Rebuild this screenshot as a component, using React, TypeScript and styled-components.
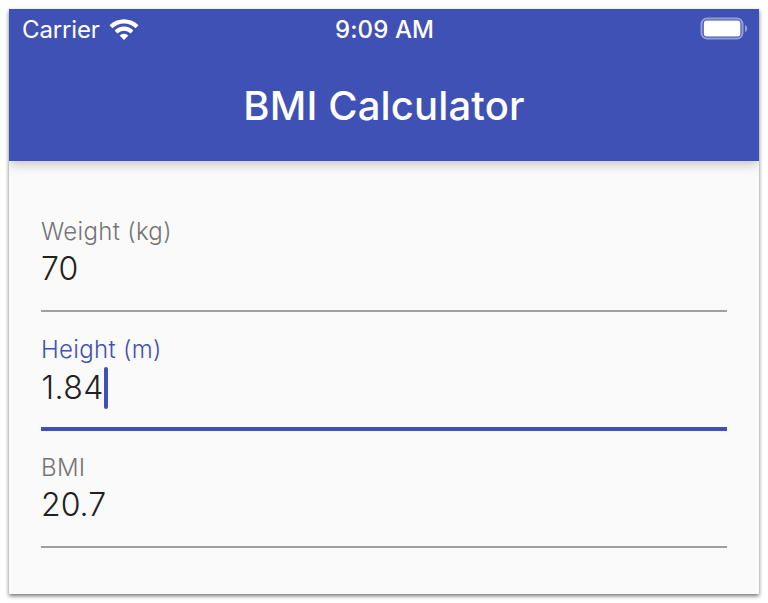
import styled, { createGlobalStyle } from "styled-components";

const GlobalStyle = createGlobalStyle`
    html, body {
        margin: 0;
        padding: 0;
        background: #ffffff;
    }
`

const WifiIcon = () => (
    <svg width="30" height="22" viewBox="0 0 30 22">
        <path d="M0.6 7.2 A20.5 20.5 0 0 1 29.4 7.2 L26.6 10.2 A16.5 16.5 0 0 0 3.4 10.2 Z" fill="#fff" />
        <path d="M5.6 12.4 A13.5 13.5 0 0 1 24.4 12.4 L21.6 15.4 A9.5 9.5 0 0 0 8.4 15.4 Z" fill="#fff" />
        <path d="M10.6 17.6 A6.4 6.4 0 0 1 19.4 17.6 L15 22 Z" fill="#fff" />
    </svg>
)

const BatteryIcon = () => (
    <svg width="48" height="24" viewBox="0 0 48 24">
        <rect x="1.5" y="1.5" width="41" height="20" rx="5.5" fill="none" stroke="#fff" strokeOpacity="0.45" strokeWidth="2" />
        <rect x="3.8" y="3.5" width="36.6" height="16" rx="3" fill="#fff" />
        <path d="M45 8 C46.6 8.5 47.2 10 47.2 11.5 C47.2 13 46.6 14.5 45 15 Z" fill="#fff" fillOpacity="0.45" />
    </svg>
)

const Field = ({ label, value, focused, last }: { label: string; value: string; focused?: boolean; last?: boolean }) => (
    <FieldBox $focused={focused} $last={last}>
        <Label $focused={focused}>{label}</Label>
        <ValueRow $focused={focused}>
            {value}
            {focused && <Caret />}
        </ValueRow>
    </FieldBox>
)

const App = () => {
    return (
        <>
            <GlobalStyle />
            <Screen>
                <Header>
                    <StatusBar>
                        <StatusLeft>
                            <span>Carrier</span>
                            <WifiIcon />
                        </StatusLeft>
                        <Clock>9:09 AM</Clock>
                        <StatusRight>
                            <BatteryIcon />
                        </StatusRight>
                    </StatusBar>
                    <Title>BMI Calculator</Title>
                </Header>
                <Form>
                    <Field label="Weight (kg)" value="70" />
                    <Field label="Height (m)" value="1.84" focused />
                    <Field label="BMI" value="20.7" last />
                </Form>
            </Screen>
        </>
    )
}

const Screen = styled.div`
    width: 750px;
    height: 585px;
    margin: 9px;
    background: #fafafa;
    box-shadow: 0 2px 4px rgba(0, 0, 0, 0.55);
    font-family: Inter, Roboto, "Liberation Sans", sans-serif;
    overflow: hidden;
`

const Header = styled.div`
    height: 152px;
    background: #3f51b5;
    color: #ffffff;
    box-shadow: 0 4px 10px rgba(0, 0, 0, 0.2);
    position: relative;
`

const StatusBar = styled.div`
    height: 40px;
    padding: 0 11px 0 13px;
    display: grid;
    grid-template-columns: 1fr auto 1fr;
    align-items: center;
    font-size: 24px;
`

const StatusLeft = styled.div`
    display: flex;
    align-items: center;
    gap: 9px;
    font-weight: 400;
    letter-spacing: -0.15px;
`

const Clock = styled.div`
    font-weight: 500;
    letter-spacing: 0.1px;
    margin-left: -1px;
`

const StatusRight = styled.div`
    display: flex;
    justify-content: flex-end;
`

const Title = styled.div`
    height: 112px;
    display: flex;
    align-items: center;
    justify-content: center;
    font-size: 40px;
    font-weight: 500;
    letter-spacing: 0.15px;
`

const Form = styled.div`
    padding: 32px 32px 0;
    display: flex;
    flex-direction: column;
`

const FieldBox = styled.div<{ $focused?: boolean; $last?: boolean }>`
    height: ${p => (p.$last ? "117px" : "119px")};
    box-sizing: border-box;
    padding-top: ${p => (p.$last ? "22px" : "24px")};
    border-bottom: ${p => (p.$focused ? "4px solid #3f51b5" : "2px solid #9e9e9e")};
`

const Label = styled.div<{ $focused?: boolean }>`
    height: ${p => (p.$focused ? "31px" : "30px")};
    margin-top: ${p => (p.$focused ? "-1px" : "0")};
    line-height: 30px;
    font-size: 24px;
    font-weight: 350;
    letter-spacing: 0.32px;
    color: ${p => (p.$focused ? "#3f51b5" : "#757575")};
`

const ValueRow = styled.div<{ $focused?: boolean }>`
    height: 44px;
    line-height: 44px;
    font-size: 32px;
    font-weight: 350;
    color: #212121;
    letter-spacing: ${p => (p.$focused ? "0.4px" : "0")};
    padding-left: ${p => (p.$focused ? "0.5px" : "0")};
    display: flex;
    align-items: center;
`

const Caret = styled.span`
    width: 4px;
    height: 42px;
    border-radius: 2px;
    background: #3f51b5;
`

export default App;
